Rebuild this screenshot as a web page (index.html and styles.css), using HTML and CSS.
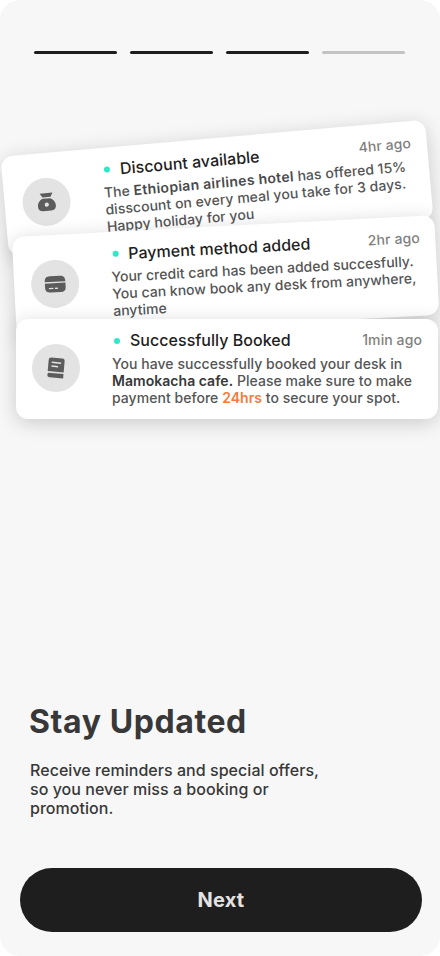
FILE: index.html
```html
<!DOCTYPE html>
<html lang="en">
<head>
<meta charset="utf-8">
<title>Stay Updated</title>
<link rel="stylesheet" href="styles.css">
</head>
<body>
<main class="screen">
  <div class="steps">
    <span class="step"></span><span class="step"></span><span class="step"></span><span class="step step-next"></span>
  </div>

  <section class="stack">
    <article class="card card-discount">
      <div class="badge">
        <svg width="24" height="24" viewBox="0 0 24 24" fill="#5c5c5c">
          <path d="M5.800 3.200H18.700L16.300 7.200H8.300Z"/>
          <path fill-rule="evenodd" d="M8.300 8.600H15.800C18.800 9.800 21 12.500 21 16C21 19.400 19 21 16 21H8C5 21 3 19.400 3 16C3 12.500 5.200 9.800 8.300 8.600ZM12 12.700A2.100 2.100 0 1 0 12 16.900A2.100 2.100 0 1 0 12 12.700Z"/>
        </svg>
      </div>
      <div class="content">
        <header class="head"><i class="dot"></i><h2 class="title">Discount available</h2><time class="time">4hr ago</time></header>
        <p class="body">The <b>Ethiopian airlines hotel</b> has offered 15%<br>disscount on every meal you take for 3 days.<br>Happy holiday for you</p>
      </div>
    </article>

    <article class="card card-payment">
      <div class="badge">
        <svg width="24" height="24" viewBox="0 0 24 24" fill="#5c5c5c">
          <path d="M1.700 9.800C1.700 5.500 3.500 4 7 4H17C20.500 4 22.300 5.500 22.300 9.800Z"/>
          <path fill-rule="evenodd" d="M1.700 11.200H22.300V15.500C22.300 19 20.500 20.300 17 20.300H7C3.500 20.300 1.700 19 1.700 15.500ZM5.500 15.700V17.100H10V15.700ZM11.500 15.700V17.100H14.500V15.700Z"/>
        </svg>
      </div>
      <div class="content">
        <header class="head"><i class="dot"></i><h2 class="title">Payment method added</h2><time class="time">2hr ago</time></header>
        <p class="body">Your credit card has been added succesfully.<br>You can know book any desk from anywhere,<br>anytime</p>
      </div>
    </article>

    <article class="card card-booked">
      <div class="badge">
        <svg class="book" width="24" height="24" viewBox="0 0 24 24" fill="#5c5c5c">
          <path fill-rule="evenodd" d="M6.500 2H17.500Q20 2 20 4.500V15.800H4V4.500Q4 2 6.500 2ZM7.300 6V7.500H16.700V6ZM7.300 9.700V11.200H14V9.700Z"/>
          <path d="M4.600 17.300H20V21.800H6.500Q4 21.800 4 19.200Q4 17.800 4.600 17.300Z"/>
        </svg>
      </div>
      <div class="content">
        <header class="head"><i class="dot"></i><h2 class="title">Successfully Booked</h2><time class="time">1min ago</time></header>
        <p class="body">You have successfully booked your desk in<br><b>Mamokacha cafe.</b> Please make sure to make<br>payment before <b class="due">24hrs</b> to secure your spot.</p>
      </div>
    </article>
  </section>

  <section class="intro">
    <h1 class="headline">Stay Updated</h1>
    <p class="lead">Receive reminders and special offers,<br>so you never miss a booking or<br>promotion.</p>
  </section>

  <button class="next">Next</button>
</main>
</body>
</html>
```
FILE: styles.css
```css
* { box-sizing: border-box; }
html { background: #fff; }
body { margin: 0; font-family: Inter, "Liberation Sans", sans-serif; }
h1, h2, p { margin: 0; }

.screen {
  display: flex;
  flex-direction: column;
  width: 440px;
  height: 956px;
  padding: 51px 0 24px;
  background: #f7f7f7;
  border-radius: 20px;
  overflow: hidden;
}

.steps { display: flex; gap: 13px; padding: 0 35px 0 34px; }
.step { flex: 1; height: 3px; border-radius: 2px; background: #1e1e1e; }
.step-next { background: #c3c3c3; }

.stack { height: 281px; margin-top: 83.5px; }
.card {
  position: relative;
  display: flex;
  align-items: flex-start;
  width: 422px;
  height: 100px;
  margin-left: 16px;
  padding: 12.5px 16px 0;
  background: #fff;
  border-radius: 12px;
  box-shadow: 0 4px 20px rgba(0, 0, 0, .18);
}
.card-discount { width: 426px; margin-left: 4px; padding: 12.5px 16px 0 18px; transform: rotate(-5deg); }
.card-payment { width: 423px; margin: -11.5px 0 0 14px; padding: 12.5px 15.5px 0 16.5px; transform: rotate(-3deg); }
.card-booked { margin-top: -7px; padding-top: 12px; }

.badge {
  display: flex;
  flex: none;
  align-items: center;
  justify-content: center;
  width: 48px;
  height: 48px;
  margin-top: 12.5px;
  background: #e3e3e3;
  border-radius: 50%;
}
.card-booked .badge { margin-top: 13px; }
.book { transform: rotate(5deg); }

.content { flex: 1; margin-left: 32px; white-space: nowrap; }
.card-discount .content { margin-left: 34px; }
.card-payment .content { margin-left: 33px; }
.head { display: flex; align-items: center; height: 18px; }
.card-booked .dot { position: relative; top: 1px; }
.dot { width: 6px; height: 6px; margin: 0 10px 0 2px; border-radius: 50%; background: #2ee8c7; }
.title { font-size: 16px; font-weight: 500; line-height: 18px; letter-spacing: .03px; color: #1e1e1e; }
.time { margin-left: auto; font-size: 14px; font-weight: 500; line-height: 18px; letter-spacing: .1px; color: #7f7f7f; }
.body { margin-top: 5.5px; font-size: 14px; font-weight: 500; line-height: 17px; letter-spacing: .02px; color: #555; }
.card-booked .body { margin-top: 6px; letter-spacing: .04px; }
.body b { font-weight: 600; color: #4a4a4a; }
.card-discount .body { letter-spacing: .06px; }
.card-discount .body b { letter-spacing: .3px; }
.card-booked .body b { color: #383838; }
.card-booked .body .due { color: #f37a3a; }

.intro { margin: 283px 0 0 30px; color: #383838; }
.headline { margin-left: -1px; font-size: 32px; font-weight: 700; line-height: 40px; letter-spacing: .6px; }
.lead { margin-top: 19px; font-size: 16px; font-weight: 500; line-height: 19px; letter-spacing: .04px; }

.next {
  width: 402px;
  height: 64px;
  margin: auto 0 0 20px;
  border: 0;
  border-radius: 32px;
  background: #1e1e1e;
  color: #e3e3e3;
  font: 700 20px/24px Inter, sans-serif;
  letter-spacing: .2px;
}
```
